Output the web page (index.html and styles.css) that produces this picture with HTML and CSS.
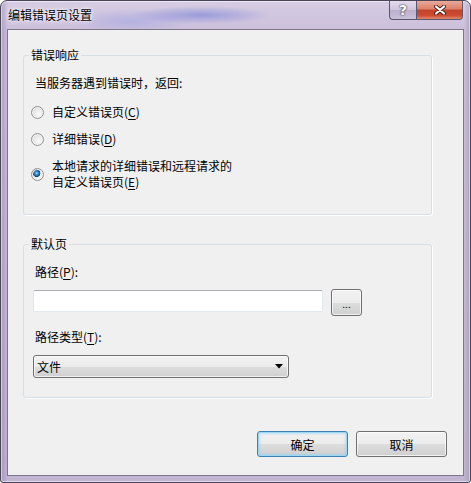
FILE: index.html
```html
<!DOCTYPE html>
<html lang="zh-CN">
<head>
    <meta charset="UTF-8">
    <title>编辑错误页设置</title>
    <link rel="stylesheet" href="styles.css">
</head>
<body>
    <div class="window">
        <div class="titlebar">
            <span class="title">编辑错误页设置</span>
            <div class="caption-buttons">
                <button class="cap help">?</button>
                <button class="cap close">
                    <svg width="12" height="10" viewBox="0 0 12 10">
                        <path d="M2 1.5 L10 8.5 M10 1.5 L2 8.5" stroke="#4a1c14" stroke-width="4" stroke-linecap="round"/>
                        <path d="M2 1.5 L10 8.5 M10 1.5 L2 8.5" stroke="#fff" stroke-width="2.2" stroke-linecap="round"/>
                    </svg>
                </button>
            </div>
        </div>

        <div class="client">
            <fieldset class="group group-errors">
                <legend>错误响应</legend>
                <p class="prompt">当服务器遇到错误时，返回:</p>
                <div class="options">
                    <label class="option"><span class="radio"></span><span>自定义错误页(<u>C</u>)</span></label>
                    <label class="option"><span class="radio"></span><span>详细错误(<u>D</u>)</span></label>
                    <label class="option"><span class="radio checked"></span><span>本地请求的详细错误和远程请求的<br>自定义错误页(<u>E</u>)</span></label>
                </div>
            </fieldset>

            <fieldset class="group group-default">
                <legend>默认页</legend>
                <p class="field-label">路径(<u>P</u>):</p>
                <div class="path-row">
                    <div class="textbox"></div>
                    <button class="btn browse">...</button>
                </div>
                <p class="field-label second">路径类型(<u>T</u>):</p>
                <div class="combo">
                    <span>文件</span>
                    <svg width="8" height="5" viewBox="0 0 8 5"><path d="M0 0 H8 L4 4.5 Z" fill="#000"/></svg>
                </div>
            </fieldset>

            <div class="actions">
                <button class="btn dialog-btn default">确定</button>
                <button class="btn dialog-btn">取消</button>
            </div>
        </div>
    </div>
</body>
</html>
```

FILE: styles.css
```css
* {
    box-sizing: border-box;
}

html, body {
    margin: 0;
}

body {
    width: 471px;
    height: 483px;
    font-family: "Noto Sans CJK SC", "Microsoft YaHei", sans-serif;
    font-size: 12px;
    color: #000;
    background: #fff;
}

/* glass frame */
.window {
    height: 483px;
    display: flex;
    flex-direction: column;
    padding: 0 6px 6px;
    border: 1px solid #4a4458;
    border-radius: 7px 7px 3px 3px;
    background:
        radial-gradient(ellipse 70px 9px at 200px 14px, rgba(70, 90, 210, 0.4), transparent),
        radial-gradient(ellipse 60px 12px at 130px 20px, rgba(140, 150, 230, 0.4), transparent),
        linear-gradient(90deg, rgba(120, 100, 145, 0.35) 0, transparent 7px, transparent 463px, rgba(120, 100, 145, 0.35) 470px),
        linear-gradient(180deg, #d6cce3 0, #cbbfdb 30px, #c2b5d4 100%);
    box-shadow: inset 0 0 0 1px rgba(255, 255, 255, 0.5);
}

.titlebar {
    flex: none;
    height: 28px;
    display: flex;
    justify-content: space-between;
    align-items: flex-start;
}

.title {
    margin: 7px 0 0 1px;
    line-height: 14px;
    text-shadow: 0 0 6px #fff, 0 0 3px #fff;
}

.caption-buttons {
    display: flex;
    margin-right: 1px;
}

.cap {
    height: 19px;
    padding: 0;
    border: 1px solid #5d5670;
    border-top: none;
    display: flex;
    align-items: center;
    justify-content: center;
}

.help {
    width: 27px;
    border-right: none;
    border-radius: 0 0 0 4px;
    background: linear-gradient(#e4dcec, #cec4dc 50%, #bbafcd 51%, #cbc0da);
    color: #fff;
    font: bold 14px "DejaVu Sans", sans-serif;
    text-shadow: 0 0 1px #222, 0 0 2px #333;
}

.close {
    width: 47px;
    border-radius: 0 0 4px 0;
    background: linear-gradient(#eaa999, #da8068 45%, #c5432b 50%, #cc4b30 80%, #e08a6f);
}

/* dialog body */
.client {
    flex: 1;
    display: flex;
    flex-direction: column;
    padding-top: 17px;
    background: #f0f0f0;
    border: 1px solid #7d7689;
}

.group {
    margin: 0 31px 0 15px;
    padding: 0;
    min-width: 0;
    border: 1px solid #d5dfe5;
    border-radius: 3px;
    box-shadow: 1px 1px 0 #fff;
}

.group legend {
    margin-left: 5px;
    padding: 0 2px;
    line-height: 16px;
}

.group-errors {
    padding-bottom: 24px;
}

.group-default {
    margin-top: 21px;
    padding-bottom: 19px;
}

.prompt,
.field-label {
    margin: 12px 0 0 11px;
    line-height: 16px;
}

.field-label.second {
    margin-top: 13px;
}

.options {
    margin: 13px 0 0 7px;
    display: flex;
    flex-direction: column;
    gap: 11px;
}

.option {
    display: flex;
    align-items: center;
    gap: 8px;
    line-height: 16px;
}

.radio {
    flex: none;
    width: 13px;
    height: 13px;
    border-radius: 50%;
    border: 1px solid #929292;
    background: radial-gradient(circle at 62% 62%, #fbfbfb 0, #e9e9e9 45%, #cfcfcf 100%);
    box-shadow: inset 0 0 0 1px #f4f4f4;
}

.radio.checked {
    background:
        radial-gradient(circle at 42% 38%, #a8e0fb 0, #3b8fd0 1.5px, #1b5f9c 3px, #0e3a68 3.6px, transparent 4px),
        radial-gradient(circle at 62% 62%, #fbfbfb 0, #e9e9e9 45%, #cfcfcf 100%);
}

u {
    text-decoration-thickness: 1px;
    text-underline-offset: 2px;
}

.path-row {
    margin: 10px 0 0 9px;
    display: flex;
    align-items: flex-start;
    gap: 8px;
}

.textbox {
    width: 290px;
    height: 22px;
    background: #fff;
    border: 1px solid #e3e9ef;
    border-top-color: #abadb3;
    border-left-color: #e2e3ea;
    border-radius: 2px;
}

.btn {
    font-family: inherit;
    font-size: 12px;
    color: #000;
    padding: 0;
    border: 1px solid #707070;
    border-radius: 3px;
    background: linear-gradient(#f2f2f2, #ebebeb 50%, #dddddd 51%, #cfcfcf);
    box-shadow: inset 0 0 0 1px rgba(255, 255, 255, 0.7);
}

.browse {
    width: 31px;
    height: 27px;
    margin-top: -1px;
    line-height: 20px;
    padding-top: 3px;
    font-size: 10px;
}

.combo {
    margin: 10px 0 0 9px;
    width: 256px;
    height: 23px;
    display: flex;
    align-items: center;
    justify-content: space-between;
    padding: 0 5px 0 3px;
    border: 1px solid #707070;
    border-radius: 3px;
    background: linear-gradient(#f2f2f2, #ebebeb 50%, #dddddd 51%, #cfcfcf);
    box-shadow: inset 0 0 0 1px rgba(255, 255, 255, 0.7);
}

.actions {
    margin: 33px 16px 0 0;
    display: flex;
    justify-content: flex-end;
    gap: 8px;
}

.dialog-btn {
    width: 91px;
    height: 26px;
}

.default {
    border-color: #3c7fb1;
    box-shadow: inset 0 0 0 1px #9ed7f5, inset 0 0 2px 2px rgba(140, 210, 245, 0.5);
}
```
